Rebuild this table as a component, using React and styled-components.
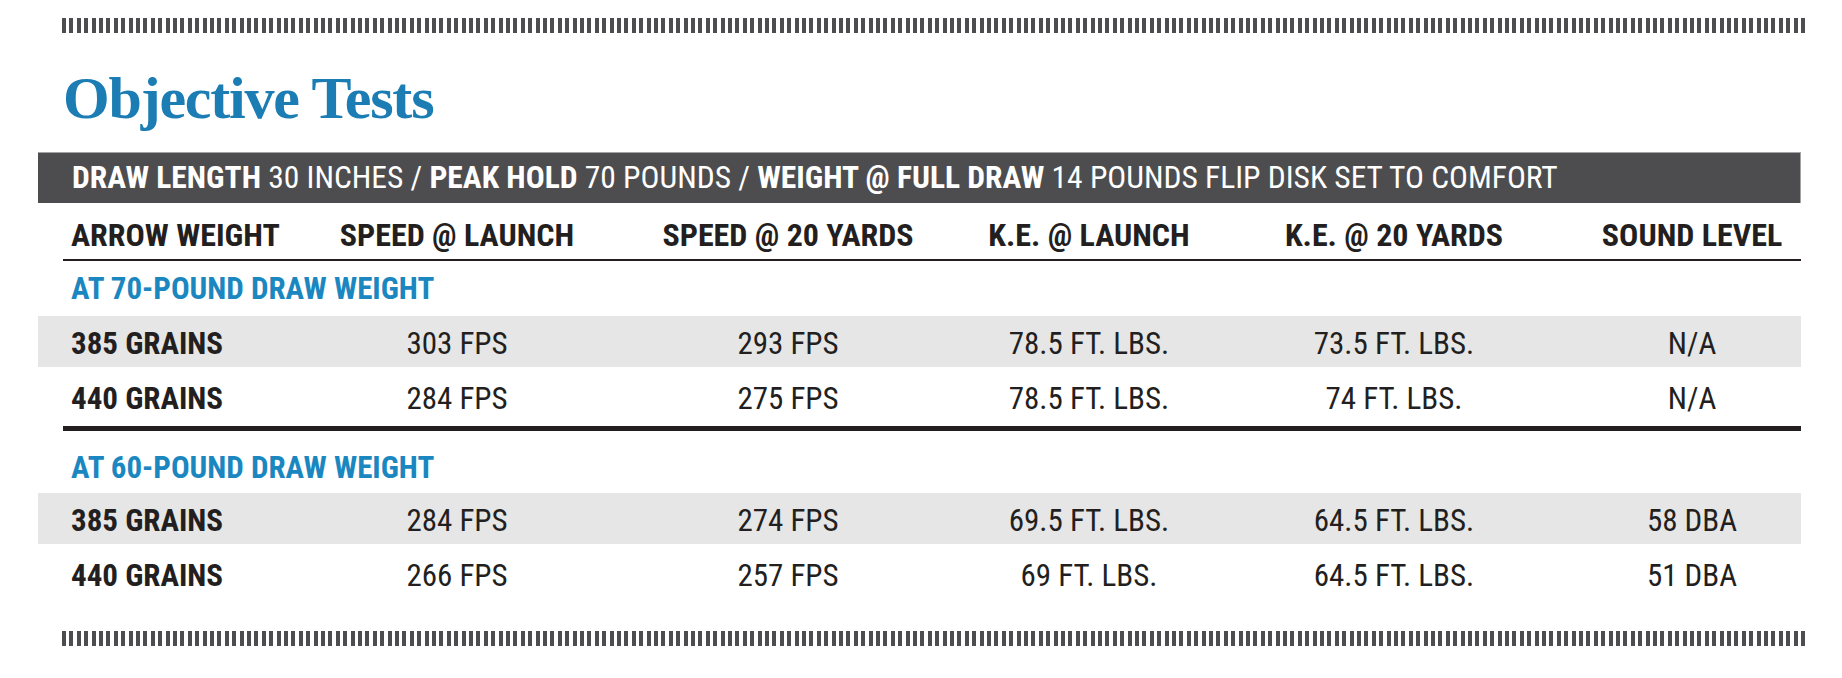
import React from "react";
import styled, { createGlobalStyle } from "styled-components";

const GlobalStyle = createGlobalStyle`
  body {
    margin: 0;
    background: #ffffff;
    font-family: "Roboto Condensed", "DejaVu Sans Condensed", "Liberation Sans Narrow", "Liberation Sans", sans-serif;
    font-stretch: condensed;
  }
`;

const Page = styled.div`
  width: 1763px;
  padding: 18px 0 0 38px;
  color: #231f20;
`;

const Stripes = styled.div`
  height: 15px;
  width: 1746px;
  margin-left: 24px;
  margin-top: ${({ $top }) => $top || 0}px;
  background: repeating-linear-gradient(
    90deg,
    #4d4d4f 0px,
    #4d4d4f 4px,
    transparent 4px,
    transparent 7.4px
  );
`;

const Title = styled.h1`
  margin: 35px 0 0 25px;
  height: 60px;
  font-family: "Liberation Serif", "Times New Roman", serif;
  font-stretch: normal;
  font-weight: 700;
  font-size: 60px;
  line-height: 60px;
  letter-spacing: -1.2px;
  color: #1b7db3;
`;

const SpecBar = styled.div`
  margin-top: 24px;
  height: 50px;
  line-height: 50px;
  padding-left: 34px;
  background: #4d4d4f;
  border-top: 1px solid #a3a3a3;
  border-right: 1px solid #a3a3a3;
  color: #ffffff;
  font-size: 31.5px;
  white-space: nowrap;

  b {
    font-weight: 700;
  }
`;

const Grid = styled.div`
  display: grid;
  grid-template-columns: 261px 316px 346px 256px 354px 230px;
  align-items: start;
  height: ${({ $h }) => $h}px;
  margin-bottom: ${({ $mb }) => $mb || 0}px;
  padding-top: ${({ $pt }) => $pt || 0}px;
  line-height: ${({ $lh }) => $lh}px;
  font-size: ${({ $fs }) => $fs}px;
  background: ${({ $shade }) => ($shade ? "#e6e6e6" : "transparent")};
  white-space: nowrap;
`;

const Cell = styled.div`
  text-align: ${({ $left }) => ($left ? "left" : "center")};
  padding-left: ${({ $left }) => ($left ? "33px" : "0")};
  font-weight: ${({ $bold }) => ($bold ? 700 : 400)};

  &:last-child {
    padding-left: 12px;
  }
`;

const Rule = styled.div`
  margin: ${({ $mt }) => $mt || 0}px 0 0 25px;
  height: ${({ $size }) => $size}px;
  background: #231f20;
`;

const SectionLabel = styled.div`
  padding: ${({ $pt }) => $pt || 0}px 0 0 33px;
  height: ${({ $lh }) => $lh}px;
  line-height: ${({ $lh }) => $lh}px;
  font-size: 31px;
  font-weight: 700;
  color: #1b87c0;
`;

const columns = [
  "ARROW WEIGHT",
  "SPEED @ LAUNCH",
  "SPEED @ 20 YARDS",
  "K.E. @ LAUNCH",
  "K.E. @ 20 YARDS",
  "SOUND LEVEL",
];

const sections = [
  {
    label: "AT 70-POUND DRAW WEIGHT",
    pt: 0,
    lh: 55,
    rows: [
      ["385 GRAINS", "303 FPS", "293 FPS", "78.5 FT. LBS.", "73.5 FT. LBS.", "N/A"],
      ["440 GRAINS", "284 FPS", "275 FPS", "78.5 FT. LBS.", "74 FT. LBS.", "N/A"],
    ],
  },
  {
    label: "AT 60-POUND DRAW WEIGHT",
    pt: 12,
    lh: 50,
    rows: [
      ["385 GRAINS", "284 FPS", "274 FPS", "69.5 FT. LBS.", "64.5 FT. LBS.", "58 DBA"],
      ["440 GRAINS", "266 FPS", "257 FPS", "69 FT. LBS.", "64.5 FT. LBS.", "51 DBA"],
    ],
  },
];

const DataRow = ({ values, shade }) => (
  <Grid $h={46} $pt={5} $lh={46} $fs={31} $mb={4} $shade={shade}>
    {values.map((v, i) => (
      <Cell key={i} $left={i === 0} $bold={i === 0}>
        {v}
      </Cell>
    ))}
  </Grid>
);

const App = () => {
  return (
    <>
      <GlobalStyle />
      <Page>
        <Stripes />
        <Title>Objective Tests</Title>
        <SpecBar>
          <b>DRAW LENGTH</b> 30 INCHES / <b>PEAK HOLD</b> 70 POUNDS /{" "}
          <b>WEIGHT @ FULL DRAW</b> 14 POUNDS FLIP DISK SET TO COMFORT
        </SpecBar>

        <Grid $h={48} $pt={8} $lh={48} $fs={32}>
          {columns.map((c, i) => (
            <Cell key={c} $left={i === 0} $bold>
              {c}
            </Cell>
          ))}
        </Grid>
        <Rule $size={2} />

        {sections.map((s, si) => (
          <React.Fragment key={s.label}>
            {si > 0 && <Rule $size={5} $mt={4} />}
            <SectionLabel $pt={s.pt} $lh={s.lh}>
              {s.label}
            </SectionLabel>
            {s.rows.map((r, ri) => (
              <DataRow key={ri} values={r} shade={ri % 2 === 0} />
            ))}
          </React.Fragment>
        ))}

        <Stripes $top={32} />
      </Page>
    </>
  );
};

export default App;
